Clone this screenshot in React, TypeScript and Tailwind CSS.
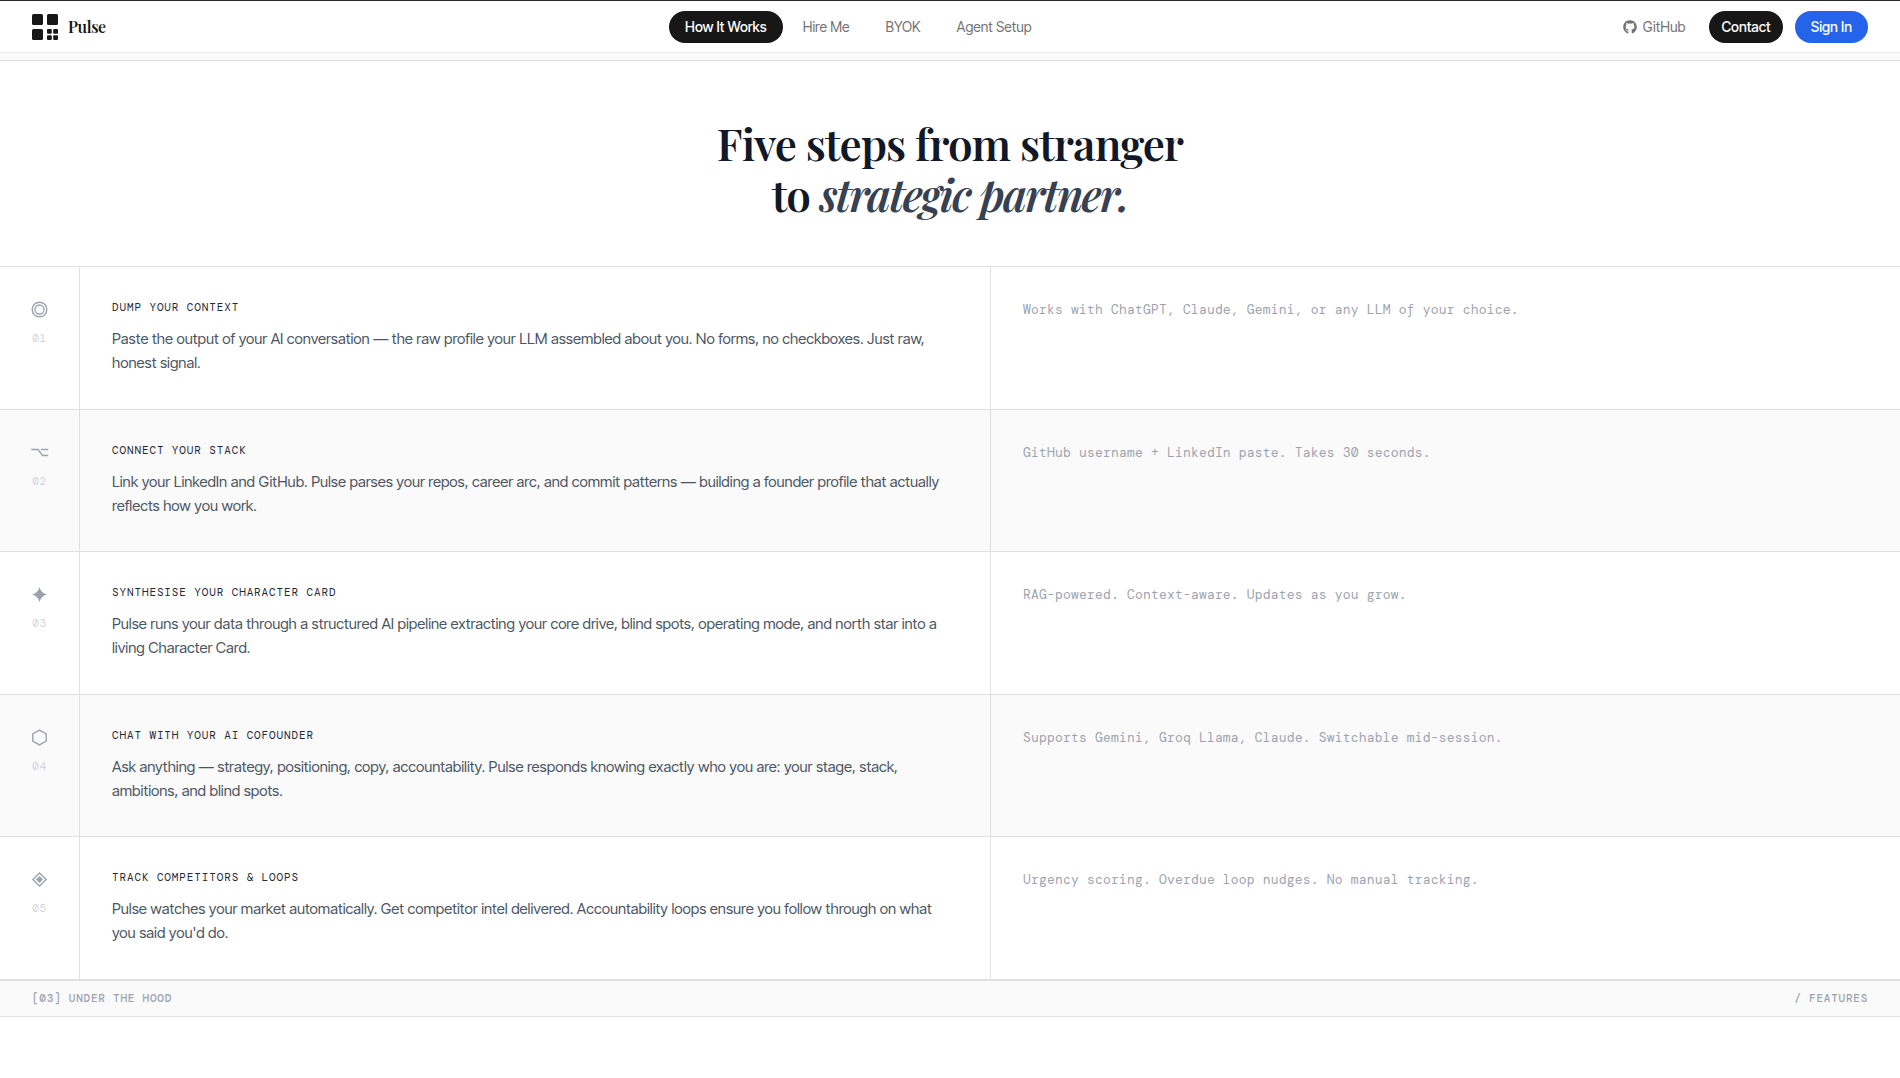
import React from "react";
import { FaGithub } from "react-icons/fa";

interface Step {
  num: string;
  title: string;
  text: string;
  note: string;
  icon: React.ReactNode;
}

const navLinks = ["How It Works", "Hire Me", "BYOK", "Agent Setup"];

const steps: Step[] = [
  {
    num: "01",
    title: "Dump your context",
    text: "Paste the output of your AI conversation — the raw profile your LLM assembled about you. No forms, no checkboxes. Just raw, honest signal.",
    note: "Works with ChatGPT, Claude, Gemini, or any LLM of your choice.",
    icon: (
      <>
        <circle cx="7.5" cy="8.5" r="7.3" />
        <circle cx="7.5" cy="8.5" r="4.5" />
      </>
    ),
  },
  {
    num: "02",
    title: "Connect your stack",
    text: "Link your LinkedIn and GitHub. Pulse parses your repos, career arc, and commit patterns — building a founder profile that actually reflects how you work.",
    note: "GitHub username + LinkedIn paste. Takes 30 seconds.",
    icon: <path d="M-.8 5.5h6.8l4.5 6h5.7M9 5.5h7.2" />,
  },
  {
    num: "03",
    title: "Synthesise your character card",
    text: "Pulse runs your data through a structured AI pipeline extracting your core drive, blind spots, operating mode, and north star into a living Character Card.",
    note: "RAG-powered. Context-aware. Updates as you grow.",
    icon: <path d="M7.5 1Q9 7 15 8.5Q9 10 7.5 16Q6 10 0 8.5Q6 7 7.5 1Z" fill="currentColor" stroke="none" />,
  },
  {
    num: "04",
    title: "Chat with your AI cofounder",
    text: "Ask anything — strategy, positioning, copy, accountability. Pulse responds knowing exactly who you are: your stage, stack, ambitions, and blind spots.",
    note: "Supports Gemini, Groq Llama, Claude. Switchable mid-session.",
    icon: <path d="M7.5 1.1l6.7 3.7v7.4l-6.7 3.7l-6.7-3.7V4.8z" />,
  },
  {
    num: "05",
    title: "Track competitors & loops",
    text: "Pulse watches your market automatically. Get competitor intel delivered. Accountability loops ensure you follow through on what you said you'd do.",
    note: "Urgency scoring. Overdue loop nudges. No manual tracking.",
    icon: (
      <>
        <path d="M7.5 1.9l6.6 6.6l-6.6 6.6L.9 8.5z" />
        <path d="M7.5 4.9l3.6 3.6l-3.6 3.6l-3.6-3.6z" fill="currentColor" stroke="none" />
      </>
    ),
  },
];

function Logo() {
  return (
    <svg width="26" height="26" viewBox="0 0 26 26" fill="#171717" aria-hidden="true">
      <rect width="11" height="11" rx="1.5" />
      <rect x="15" width="11" height="11" rx="1.5" />
      <rect y="15" width="11" height="11" rx="1.5" />
      <rect x="15" y="15" width="4.8" height="4.8" rx="1" />
      <rect x="21.2" y="15" width="4.8" height="4.8" rx="1" />
      <rect x="15" y="21.2" width="4.8" height="4.8" rx="1" />
      <rect x="21.2" y="21.2" width="4.8" height="4.8" rx="1" />
    </svg>
  );
}

function Header() {
  return (
    <header className="flex h-[52px] items-center justify-between border-b border-[#ebebeb] bg-white px-8 text-sm">
      <a href="#" className="flex items-center gap-[10px]">
        <Logo />
        <span className="font-['Playfair_Display','Liberation_Serif',serif] text-base font-semibold tracking-tight text-[#171717]">Pulse</span>
      </a>

      <nav className="flex items-center gap-1">
        {navLinks.map((label, idx) => (
          <a
            key={label}
            href="#"
            className={`flex h-8 items-center rounded-full px-4 ${
              idx === 0 ? "bg-[#171717] font-medium text-white" : "text-[#737373]"
            }`}
          >
            {label}
          </a>
        ))}
      </nav>

      <div className="flex items-center gap-3">
        <a href="#" className="flex items-center gap-[6px] px-3 text-[#737373]">
          <FaGithub size={14} />
          GitHub
        </a>
        <button className="h-8 rounded-full bg-[#171717] px-3 font-medium text-white">Contact</button>
        <button className="h-8 rounded-full bg-[#2563eb] px-4 font-medium text-white">Sign In</button>
      </div>
    </header>
  );
}

function StepRow({ step }: { step: Step }) {
  return (
    <li className="group grid grid-cols-[80px_1fr_1fr] border-b border-[#e0e0e0] even:bg-[#fafafa]">
      <div className="flex flex-col items-center gap-[13px] border-r border-[#e0e0e0] pt-[34px]">
        <svg
          width="16"
          height="16"
          viewBox="0 0 16 16"
          fill="none"
          stroke="currentColor"
          strokeWidth="1.4"
          className="overflow-visible text-[#9ca3af]"
          aria-hidden="true"
        >
          {step.icon}
        </svg>
        <span className="text-[11px] leading-4 tracking-wider text-[#d1d5db] font-['DM_Mono','Liberation_Mono',monospace]">{step.num}</span>
      </div>

      <div className="px-8 pt-8 pb-[34px] group-even:pb-[33px]">
        <h3 className="mb-3 text-[11px] leading-4 tracking-[0.08em] text-[#1f2937] uppercase font-['DM_Mono','Liberation_Mono',monospace]">
          {step.title}
        </h3>
        <p className="text-[15px] leading-6 text-[#4b5563]">{step.text}</p>
      </div>

      <div className="border-l border-[#e0e0e0] px-8 pt-8">
        <p className="text-[13px] leading-[22px] tracking-[0.015em] text-[#9ca3af] font-['DM_Mono','Liberation_Mono',monospace]">{step.note}</p>
      </div>
    </li>
  );
}

export default function App() {
  return (
    <div className="min-h-screen border-t border-[#27272a] bg-white font-['Inter_Tight','Roboto',sans-serif]">
      <Header />
      <div className="h-2 border-b border-[#e0e0e0] bg-[#fafafa]" />

      <main>
        <section>
          <div className="border-b border-[#e0e0e0] px-8 pt-14 pb-[47px] text-center">
            <h2 className="text-[44px] leading-[51px] font-semibold tracking-[-0.02em] text-[#111827] font-['Playfair_Display','Liberation_Serif',serif]">
              Five steps from stranger
              <br />
              to <em className="tracking-[-0.04em] text-[#374151]">strategic partner.</em>
            </h2>
          </div>
          <ol>
            {steps.map((step) => (
              <StepRow key={step.num} step={step} />
            ))}
          </ol>
        </section>

        {/* Next section bar */}
        <div className="flex items-center justify-between border-y border-[#e0e0e0] bg-[#fafafa] px-8 pt-[9px] pb-[10px] text-[11px] leading-4 font-medium tracking-[0.07em] text-[#9ca3af] uppercase font-['DM_Mono','Liberation_Mono',monospace]">
          <span>[03] Under the hood</span>
          <span>/ Features</span>
        </div>
      </main>
    </div>
  );
}
